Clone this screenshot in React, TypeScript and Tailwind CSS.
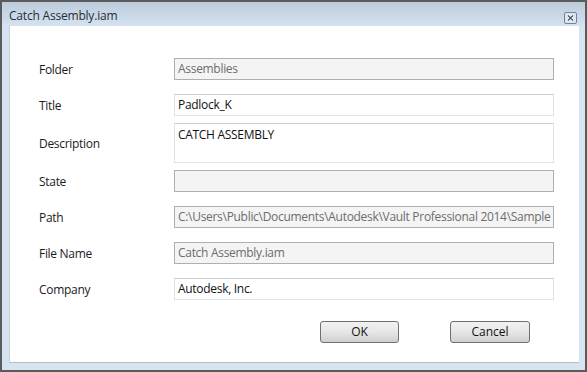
import React from 'react';

const font = { fontFamily: '"Open Sans", "Noto Sans", sans-serif' };

function Field({ value, disabled, tall }: { value: string; disabled?: boolean; tall?: boolean }) {
  return (
    <div
      className={`w-[380px] overflow-hidden whitespace-nowrap border px-[3px] text-[12px] tracking-[-0.3px] ${
        tall ? 'h-[40px] pt-[2px]' : 'flex h-[22px] items-center'
      } ${
        disabled
          ? 'border-[#adb0b3] bg-[#f4f4f4] text-[#6d6d6d]'
          : 'border-[#dfe3e8] border-t-[#c9ced4] bg-white text-[#111]'
      }`}
    >
      {value}
    </div>
  );
}

function Row({ label, children, className = '' }: { label: string; children: React.ReactNode; className?: string }) {
  return (
    <div className={`flex items-center ${className}`}>
      <span className="w-[135px] pt-[1px] text-[12px] tracking-[-0.3px] text-[#1b1b1b]">{label}</span>
      {children}
    </div>
  );
}

function Button({ label, width }: { label: string; width: string }) {
  return (
    <button
      className={`${width} flex h-[22px] items-center justify-center rounded-[3px] border border-[#707070] bg-gradient-to-b from-[#f2f2f2] via-[#e6e6e6] to-[#cfcfcf] text-[12px] text-[#111]`}
    >
      {label}
    </button>
  );
}

export default function App() {
  return (
    <div className="h-[372px] w-[587px] border-2 border-[#5b5b5b] bg-[#d6e3f1]" style={font}>
      {/* title bar */}
      <div className="flex h-[24px] items-center justify-between bg-gradient-to-b from-[#bccbdb] to-[#d5e2ef] pl-[7px] pr-[8px]">
        <span className="pt-[4px] text-[12px] tracking-[-0.2px] text-[#1e2d3d]">Catch Assembly.iam</span>
        <svg width="13" height="12" viewBox="0 0 13 12" className="mt-[7px]">
          <rect x="0.5" y="0.5" width="12" height="11" rx="1.5" fill="#dde6ef" stroke="#6f82a0" />
          <path d="M4 3.5 L9 8.5 M9 3.5 L4 8.5" stroke="#ffffff" strokeWidth="3" />
          <path d="M4 3.5 L9 8.5 M9 3.5 L4 8.5" stroke="#4a5566" strokeWidth="1.4" />
        </svg>
      </div>

      {/* content */}
      <div className="mx-[7px] mr-[6px] h-[337px] border-b border-l border-[#b8bcc0] border-l-[#c8d0d8] bg-white pl-[29px] pt-[32px]">
        <Row label="Folder">
          <Field value="Assemblies" disabled />
        </Row>
        <Row label="Title" className="mt-[14px]">
          <Field value="Padlock_K" />
        </Row>
        <div className="mt-[7px] flex items-center">
          <span className="w-[135px] pt-[2px] text-[12px] tracking-[-0.3px] text-[#1b1b1b]">Description</span>
          <Field value="CATCH ASSEMBLY" tall />
        </div>
        <Row label="State" className="mt-[7px]">
          <Field value="" disabled />
        </Row>
        <Row label="Path" className="mt-[14px]">
          <Field value="C:\Users\Public\Documents\Autodesk\Vault Professional 2014\Sample" disabled />
        </Row>
        <Row label="File Name" className="mt-[14px]">
          <Field value="Catch Assembly.iam" disabled />
        </Row>
        <Row label="Company" className="mt-[14px]">
          <Field value="Autodesk, Inc." />
        </Row>
        <div className="mt-[21px] flex gap-[51px] pl-[281px]">
          <Button label="OK" width="w-[79px]" />
          <Button label="Cancel" width="w-[80px]" />
        </div>
      </div>
    </div>
  );
}
